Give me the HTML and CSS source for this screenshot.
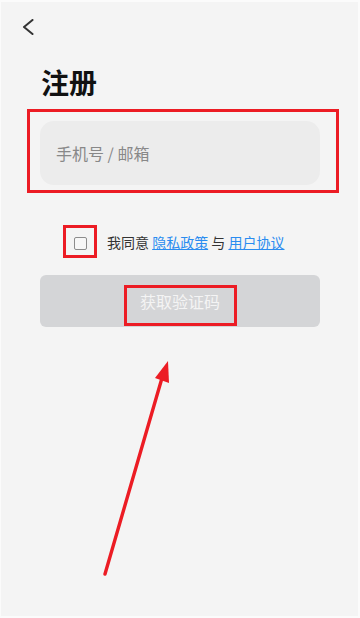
FILE: index.html
```html
<!DOCTYPE html>
<html lang="zh-CN">
<head>
    <meta charset="UTF-8">
    <meta name="viewport" content="width=device-width, initial-scale=1.0">
    <title>注册</title>
    <link rel="stylesheet" href="styles.css">
</head>
<body>
    <div class="screen">
        <div class="topbar">
            <svg class="back" width="12" height="16" viewBox="0 0 12 16">
                <path d="M10.5 1 L2 8 L10.5 15" fill="none" stroke="#333" stroke-width="2" stroke-linecap="round" stroke-linejoin="round"/>
            </svg>
        </div>
        <h1 class="title">注册</h1>
        <div class="mark mark-input">
            <div class="field">手机号 / 邮箱</div>
        </div>
        <div class="agree">
            <div class="mark mark-check">
                <span class="checkbox"></span>
            </div>
            <p class="agree-text">我同意 <a href="#">隐私政策</a> 与 <a href="#">用户协议</a></p>
        </div>
        <button class="code-btn">
            <span class="mark mark-btn">获取验证码</span>
        </button>
        <svg class="arrow" width="360" height="618" viewBox="0 0 360 618">
            <line x1="105" y1="574" x2="162" y2="378" stroke="#ec1c24" stroke-width="3.4" stroke-linecap="round"/>
            <polygon points="168,361 169,383 155,378" fill="#ec1c24"/>
        </svg>
    </div>
</body>
</html>
```

FILE: styles.css
```css
body {
    margin: 0;
    font-family: "Noto Sans CJK SC", "Noto Sans", sans-serif;
    background: #fff;
}
.screen {
    position: relative;
    width: 360px;
    height: 618px;
    box-sizing: border-box;
    background: #f4f4f4;
    border: 2px solid #fbfbfb;
    border-width: 2px 2px 2px 1px;
    overflow: hidden;
}
.topbar {
    height: 50px;
    padding: 17px 0 0 21px;
    box-sizing: border-box;
}
.back {
    display: block;
}
.title {
    margin: 10px 0 0 40px;
    font-size: 28px;
    line-height: 40px;
    font-weight: bold;
    color: #111;
}
.mark {
    border: 3px solid #ec1c24;
    box-sizing: border-box;
}
.mark-input {
    width: 312px;
    margin: 7px 0 0 26px;
    padding: 9px 16px 5px 10px;
}
.field {
    height: 64px;
    border-radius: 14px;
    background: #ececec;
    padding-left: 16px;
    display: flex;
    align-items: center;
    font-size: 16px;
    color: #888;
}
.agree {
    display: flex;
    align-items: center;
    margin: 32px 0 0 62px;
}
.mark-check {
    width: 34px;
    height: 33px;
    display: flex;
    align-items: center;
    justify-content: center;
    padding: 3px 0 0 1px;
}
.checkbox {
    width: 11px;
    height: 11px;
    border: 1px solid #8c8c8c;
    border-radius: 2px;
    background: #f7f7f7;
}
.agree-text {
    margin: 0 0 0 10px;
    font-size: 14px;
    color: #333;
}
.agree-text a {
    color: #2a8cf0;
}
.code-btn {
    display: flex;
    justify-content: center;
    align-items: flex-end;
    width: 280px;
    height: 52px;
    margin: 17px 0 0 39px;
    padding: 0 0 1px;
    border: none;
    border-radius: 6px;
    background: #d4d5d7;
    font-family: inherit;
}
.mark-btn {
    width: 113px;
    height: 41px;
    padding-bottom: 9px;
    display: flex;
    align-items: center;
    justify-content: center;
    font-size: 16px;
    color: #f4f4f4;
}
.arrow {
    position: absolute;
    left: -1px;
    top: -2px;
    pointer-events: none;
}
```
